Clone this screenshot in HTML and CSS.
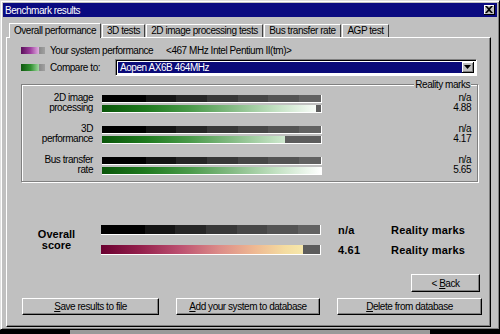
FILE: index.html
```html
<!DOCTYPE html>
<html lang="en">
<head>
    <meta charset="UTF-8">
    <title>Benchmark results</title>
    <link rel="stylesheet" href="styles.css">
</head>
<body>

    <div class="window">
        <div class="titlebar">
            <span class="title">Benchmark results</span>
            <span class="close-btn">
                <svg width="8" height="7" viewBox="0 0 8 7"><path d="M0 0h2l2 2 2-2h2L5 3.5 8 7H6L4 5 2 7H0l3-3.5z" fill="#000"/></svg>
            </span>
        </div>

        <div class="tabs">
            <div class="tab tab-active tab-overall">Overall performance</div>
            <div class="tab tab-3d">3D tests</div>
            <div class="tab tab-2d">2D image processing tests</div>
            <div class="tab tab-bus">Bus transfer rate</div>
            <div class="tab tab-agp">AGP test</div>
        </div>

        <div class="panel">
            <div class="legend-row">
                <span class="swatch swatch-purple"></span>
                <span class="legend-label label-system">Your system performance</span>
                <span class="sysname">&lt;467 MHz Intel Pentium II(tm)&gt;</span>
            </div>
            <div class="legend-row legend-compare">
                <span class="swatch swatch-green"></span>
                <span class="legend-label label-compare">Compare to:</span>
                <div class="combo">
                    <span class="combo-text">Aopen AX6B 464MHz</span>
                    <span class="combo-btn">
                        <svg width="7" height="4" viewBox="0 0 7 4"><path d="M0 0h7L3.5 4z" fill="#000"/></svg>
                    </span>
                </div>
            </div>

            <div class="group">
                <span class="group-title">Reality marks</span>

                <div class="mark-row">
                    <div class="mark-label">2D image<br>processing</div>
                    <div class="bars">
                        <div class="bar bar-black"></div>
                        <div class="bar bar-rest"><div class="fill fill-green" style="width: 214px"></div></div>
                    </div>
                    <div class="mark-values">n/a<br>4.88</div>
                </div>

                <div class="mark-row">
                    <div class="mark-label">3D<br>performance</div>
                    <div class="bars">
                        <div class="bar bar-black"></div>
                        <div class="bar bar-rest"><div class="fill fill-green" style="width: 183px"></div></div>
                    </div>
                    <div class="mark-values">n/a<br>4.17</div>
                </div>

                <div class="mark-row">
                    <div class="mark-label">Bus transfer<br>rate</div>
                    <div class="bars">
                        <div class="bar bar-black"></div>
                        <div class="bar bar-rest"><div class="fill fill-green" style="width: 219px"></div></div>
                    </div>
                    <div class="mark-values">n/a<br>5.65</div>
                </div>
            </div>

            <div class="overall">
                <div class="overall-label">Overall<br>score</div>
                <div class="overall-rows">
                    <div class="overall-row">
                        <div class="bar bar-big bar-black"></div>
                        <span class="overall-value">n/a</span>
                        <span class="overall-unit">Reality marks</span>
                    </div>
                    <div class="overall-row">
                        <div class="bar bar-big bar-rest"><div class="fill fill-maroon" style="width: 202px"></div></div>
                        <span class="overall-value">4.61</span>
                        <span class="overall-unit">Reality marks</span>
                    </div>
                </div>
            </div>

            <div class="back-row">
                <button class="btn btn-back">&lt; <u>B</u>ack</button>
            </div>

            <div class="button-row">
                <button class="btn"><u>S</u>ave results to file</button>
                <button class="btn"><u>A</u>dd your system to database</button>
                <button class="btn"><u>D</u>elete from database</button>
            </div>
        </div>
    </div>

    <div class="behind">
        <div class="behind-dark"></div>
        <div class="behind-light"></div>
        <div class="behind-dark"></div>
    </div>

</body>
</html>
```

FILE: styles.css
```css
* {
    box-sizing: border-box;
}

body {
    margin: 0;
    width: 500px;
    height: 334px;
    overflow: hidden;
    background-color: #c0c0c0;
    font-family: "Liberation Sans", Arial, sans-serif;
    font-size: 10px;
    letter-spacing: -0.45px;
    color: #000;
}

.window {
    height: 330px;
    padding: 2px 2px 0 2px;
    border-top: 1px solid #dfdfdf;
    border-left: 1px solid #dfdfdf;
    border-right: 1px solid #000;
    border-bottom: 1px solid #000;
    box-shadow: inset 1px 1px #fff, inset -1px -1px #808080;
}

/* title bar */

.titlebar {
    height: 14px;
    display: flex;
    align-items: center;
    justify-content: space-between;
    padding: 0 2px 0 2px;
    background-color: #0a0a80;
    color: #fff;
}

.close-btn {
    width: 11px;
    height: 10px;
    display: flex;
    align-items: center;
    justify-content: center;
    background-color: #c0c0c0;
    border-right: 1px solid #000;
    border-bottom: 1px solid #000;
    box-shadow: inset 1px 1px #fff;
}

/* tabs */

.tabs {
    display: flex;
    align-items: flex-end;
    height: 20px;
    padding-left: 6px;
}

.tab {
    height: 13px;
    line-height: 12px;
    text-align: center;
    border-left: 1px solid #fff;
    border-top: 1px solid #fff;
    border-right: 1px solid #404040;
    margin-left: 1px;
}

.tab-active {
    height: 15px;
    line-height: 13px;
    margin-left: 0;
    position: relative;
    top: 1px;
    background-color: #c0c0c0;
}

.tab-overall { width: 92px; }
.tab-3d { width: 43px; }
.tab-2d { width: 117px; }
.tab-bus { width: 77px; }
.tab-agp { width: 47px; }

/* panel */

.panel {
    height: 290px;
    margin: 0 6px 0 3px;
    padding: 6px 10px 0 14px;
    border-top: 1px solid #fff;
    border-left: 1px solid #fff;
    border-right: 1px solid #000;
    border-bottom: 1px solid #000;
    box-shadow: inset -1px -1px #808080;
}

.legend-row {
    display: flex;
    align-items: center;
    height: 12px;
}

.legend-compare {
    height: 17px;
    margin-top: 3px;
}

.swatch {
    width: 24px;
    height: 7px;
    margin-right: 5px;
}

.swatch-purple {
    background: linear-gradient(to right, #5a105a, #a040a0 40%, #e0b0e0 75%, #8a8a8a 76%, #a0a0a0);
}

.swatch-green {
    background: linear-gradient(to right, #105810, #309030 40%, #a0d8a0 75%, #8a8a8a 76%, #a0a0a0);
}

.label-system {
    width: 116px;
}

.label-compare {
    width: 65px;
}

.combo {
    width: 362px;
    height: 17px;
    display: flex;
    padding: 2px;
    background-color: #fff;
    border-top: 1px solid #808080;
    border-left: 1px solid #808080;
    border-right: 1px solid #fff;
    border-bottom: 1px solid #fff;
    box-shadow: inset 1px 1px #000;
}

.combo-text {
    flex: 1;
    padding-left: 2px;
    line-height: 11px;
    background-color: #0a0a78;
    color: #fff;
}

.combo-btn {
    width: 12px;
    display: flex;
    align-items: center;
    justify-content: center;
    background-color: #c0c0c0;
    border-right: 1px solid #000;
    border-bottom: 1px solid #000;
    box-shadow: inset 1px 1px #fff, inset -1px -1px #808080;
}

/* reality marks group */

.group {
    position: relative;
    height: 98px;
    margin-top: 8px;
    width: 457px;
    padding: 10px 6px 0 0;
    border: 1px solid #808080;
    box-shadow: inset 1px 1px #fff, 1px 1px #fff;
}

.group-title {
    position: absolute;
    top: -6px;
    right: 6px;
    padding: 0 1px;
    background-color: #c0c0c0;
}

.mark-row {
    display: flex;
    margin-bottom: 13px;
}

.mark-label {
    width: 71px;
    margin-right: 9px;
    margin-top: -2px;
    line-height: 10px;
    text-align: right;
}

.bars {
    width: 220px;
    display: flex;
    flex-direction: column;
    gap: 2px;
}

.bar {
    height: 8px;
    display: flex;
    border-right: 1px solid #fff;
    border-bottom: 1px solid #fff;
}

.bar-big {
    width: 220px;
    height: 10px;
}

.bar-black {
    background: linear-gradient(to right,
        #000 0 20%, #141414 20% 34%, #262626 34% 48%, #383838 48% 62%,
        #474747 62% 76%, #545454 76% 90%, #626262 90% 100%);
}

.bar-rest {
    background-color: #5c5c5c;
}

.fill {
    height: 100%;
    background-size: 219px 100%;
}

.fill-green {
    background-image: linear-gradient(to right, #0a560a, #1f7a1f 20%, #4a9a4a 40%, #86bc86 60%, #c4e2c4 80%, #fff);
}

.fill-maroon {
    background-image: linear-gradient(to right, #6a0030, #94204c 18%, #bc5070 36%, #dc8c88 54%, #eeb892 70%, #f4dca0 84%, #f8f2b4);
}

.mark-values {
    flex: 1;
    margin-top: -2px;
    line-height: 10px;
    text-align: right;
}

/* overall score */

.overall {
    display: flex;
    align-items: center;
    margin-top: 43px;
}

.overall-label {
    width: 71px;
    margin-right: 9px;
    text-align: center;
    font-size: 11px;
    font-weight: bold;
    letter-spacing: 0;
    line-height: 11px;
}

.overall-rows {
    display: flex;
    flex-direction: column;
    gap: 10px;
}

.overall-row {
    display: flex;
    align-items: center;
    height: 10px;
}

.overall-value,
.overall-unit {
    font-size: 11px;
    font-weight: bold;
    letter-spacing: 0.2px;
}

.overall-value {
    width: 53px;
    margin-left: 17px;
}

/* buttons */

.back-row {
    display: flex;
    justify-content: flex-end;
    margin-top: 19px;
}

.btn {
    height: 17px;
    padding: 0;
    font-family: inherit;
    font-size: 10px;
    letter-spacing: -0.45px;
    color: #000;
    background-color: #c0c0c0;
    border-top: 1px solid #fff;
    border-left: 1px solid #fff;
    border-right: 1px solid #000;
    border-bottom: 1px solid #000;
    box-shadow: inset -1px -1px #808080;
}

.btn-back {
    width: 69px;
    height: 18px;
}

.button-row {
    display: grid;
    grid-template-columns: 137px 144px 145px;
    gap: 17px;
    margin-top: 6px;
    margin-left: 1px;
}

/* what shows under the window */

.behind {
    display: flex;
    height: 4px;
}

.behind-dark {
    width: 70px;
    background-color: #000;
}

.behind-light {
    flex: 1;
    background-color: #9a9a9a;
}
```
